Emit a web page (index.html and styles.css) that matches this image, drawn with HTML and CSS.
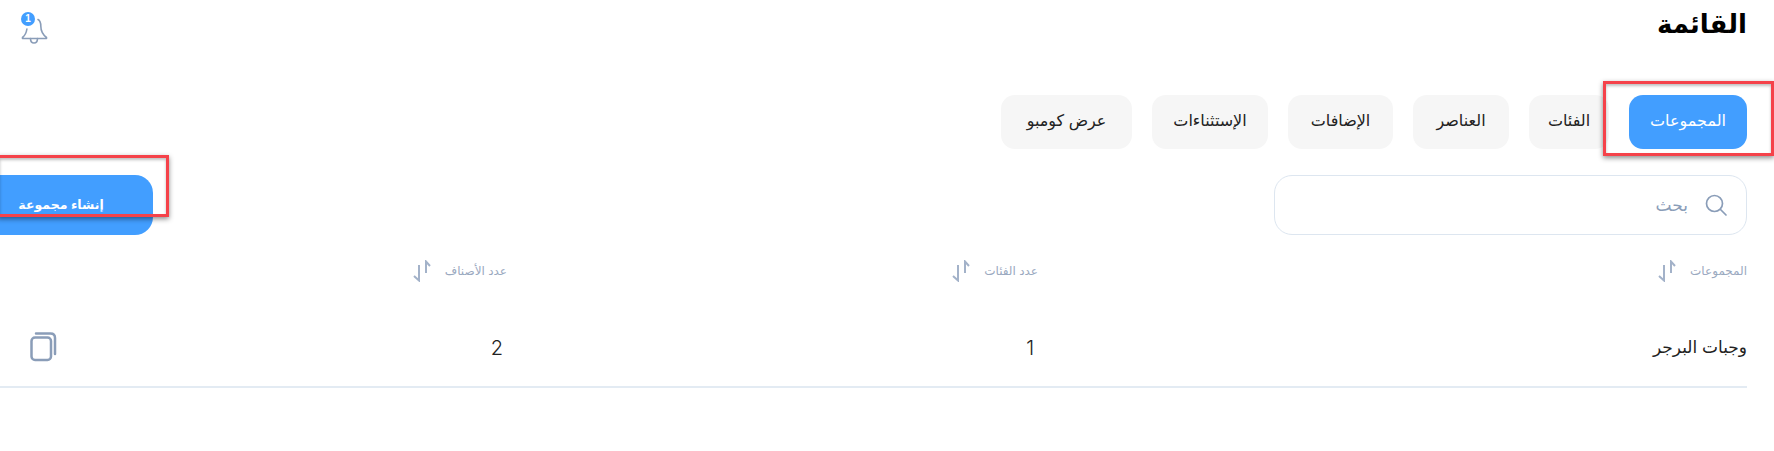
FILE: index.html
```html
<!DOCTYPE html>
<html lang="ar">
<head>
    <meta charset="UTF-8">
    <meta name="viewport" content="width=device-width, initial-scale=1.0">
    <title>القائمة</title>
    <link rel="stylesheet" href="styles.css">
</head>
<body>
    <div class="page" dir="rtl">
        <header class="topbar">
            <h1>القائمة</h1>
            <div class="bell">
                <svg width="27" height="28" viewBox="0 0 27 28" fill="none" stroke="#8a9db8" stroke-width="1.6" stroke-linecap="round" stroke-linejoin="round">
                    <path d="M17 1.500c2.200 1.200 2.800 3.200 2.800 6.600 0 4.500 1.700 8.400 5.700 11.400v1H1.500v-1c2.300-1.800 3.800-4.600 4.400-8.500"/>
                    <path d="M9.500 20.500c0 6 7 6 7 0"/>
                </svg>
                <span class="bell-badge">1</span>
            </div>
        </header>

        <nav class="tabs">
            <a class="tab active">المجموعات</a>
            <a class="tab">الفئات</a>
            <a class="tab">العناصر</a>
            <a class="tab">الإضافات</a>
            <a class="tab">الإستثناءات</a>
            <a class="tab">عرض كومبو</a>
        </nav>

        <div class="toolbar">
            <label class="search">
                <svg width="24" height="24" viewBox="0 0 24 24" fill="none" stroke="#8a9db8" stroke-width="1.700" stroke-linecap="round">
                    <circle cx="10.500" cy="10.500" r="8"/>
                    <path d="M16.500 16.500l5.500 5.500"/>
                </svg>
                <span>بحث</span>
            </label>
            <button class="create-btn">إنشاء مجموعة</button>
        </div>

        <div class="table-row table-head">
            <div class="cell">المجموعات <svg class="sort" width="18" height="22" viewBox="0 0 18 22" fill="none" stroke="#a3b2c9" stroke-width="2"><path d="M13 13V1.500L17 6"/><path d="M6 5v15.500L1 16"/></svg></div>
            <div class="cell">عدد الفئات <svg class="sort" width="18" height="22" viewBox="0 0 18 22" fill="none" stroke="#a3b2c9" stroke-width="2"><path d="M13 13V1.500L17 6"/><path d="M6 5v15.500L1 16"/></svg></div>
            <div class="cell">عدد الأصناف <svg class="sort" width="18" height="22" viewBox="0 0 18 22" fill="none" stroke="#a3b2c9" stroke-width="2"><path d="M13 13V1.500L17 6"/><path d="M6 5v15.500L1 16"/></svg></div>
        </div>

        <div class="table-row table-body">
            <div class="cell">وجبات البرجر</div>
            <div class="cell num">1</div>
            <div class="cell num">2</div>
            <div class="cell copy">
                <svg width="28" height="30" viewBox="0 0 28 30" fill="none" stroke="#8a9db8" stroke-width="2.500" stroke-linecap="round">
                    <rect x="2.500" y="5.500" width="19.500" height="22.500" rx="3.500"/>
                    <path d="M7 1.500h14.500c2.800 0 4.500 1.700 4.500 4.500V22"/>
                </svg>
            </div>
        </div>
    </div>

    <div class="mark mark-tab"></div>
    <div class="mark mark-btn"></div>
</body>
</html>
```

FILE: styles.css
```css
body {
    margin: 0;
    background: #fff;
    font-family: "Liberation Sans", "DejaVu Sans", sans-serif;
    color: #222;
    overflow: hidden;
}
.page {
    padding-right: 27px;
    height: 451px;
    box-sizing: border-box;
}
.topbar {
    display: flex;
    justify-content: space-between;
    height: 95px;
}
h1 {
    margin: 2px 0 0;
    font-size: 26px;
    line-height: 44px;
    font-weight: bold;
    color: #000;
}
.bell {
    position: relative;
    margin: 18px 0 0 21px;
    width: 27px;
    height: 28px;
}
.bell-badge {
    position: absolute;
    top: -6px;
    left: 0;
    width: 14px;
    height: 14px;
    border-radius: 50%;
    background: #429eff;
    color: #fff;
    font-size: 10px;
    font-weight: bold;
    line-height: 14px;
    text-align: center;
}
.tabs {
    display: flex;
    gap: 20px;
}
.tab {
    height: 54px;
    line-height: 52px;
    text-align: center;
    border-radius: 14px;
    background: #f6f6f6;
    font-size: 16px;
    color: #222;
}
.tab:nth-child(1) { width: 118px; }
.tab:nth-child(2) { width: 80px; }
.tab:nth-child(3) { width: 96px; }
.tab:nth-child(4) { width: 105px; }
.tab:nth-child(5) { width: 116px; }
.tab:nth-child(6) { width: 131px; }
.tab.active {
    background: #429eff;
    color: #fff;
}
.toolbar {
    display: flex;
    justify-content: space-between;
    margin-top: 26px;
}
.search {
    display: flex;
    align-items: center;
    gap: 16px;
    width: 473px;
    height: 60px;
    box-sizing: border-box;
    padding: 0 18px;
    border: 1px solid #dde6f0;
    border-radius: 18px;
    font-size: 17px;
    color: #8a9db8;
}
.create-btn {
    width: 184px;
    height: 60px;
    margin-left: -31px;
    padding-bottom: 3px;
    border: none;
    border-radius: 18px;
    background: #429eff;
    color: #fff;
    font-family: inherit;
    font-size: 12.5px;
    font-weight: bold;
}
.table-row {
    display: grid;
    grid-template-columns: 709px 531px 1fr 57px;
}
.table-head {
    margin-top: 25px;
    height: 22px;
    align-items: center;
    font-size: 12px;
    color: #9aa9c0;
}
.table-head .cell {
    display: flex;
    align-items: center;
    gap: 14px;
}
.table-body {
    margin-top: 43px;
    height: 63px;
    border-bottom: 2px solid #e3ebf3;
    align-items: start;
    font-size: 17px;
    padding-top: 12px;
    box-sizing: border-box;
}
.table-body .num {
    padding-right: 4px;
    font-family: Inter, sans-serif;
    font-weight: 300;
    font-size: 20px;
    line-height: 22px;
    color: #222;
}
.table-body .copy {
    margin-top: -5px;
}
.mark {
    position: absolute;
    box-sizing: border-box;
    border: 3px solid #f5424a;
    box-shadow: 0 2px 5px rgba(0, 0, 0, 0.45), inset 0 2px 3px rgba(0, 0, 0, 0.25);
}
.mark-tab {
    left: 1603px;
    top: 81px;
    width: 171px;
    height: 75px;
}
.mark-btn {
    left: -3px;
    top: 155px;
    width: 172px;
    height: 62px;
}
```
